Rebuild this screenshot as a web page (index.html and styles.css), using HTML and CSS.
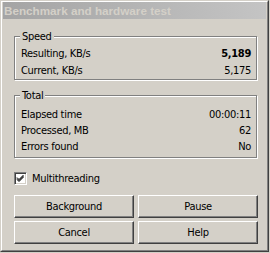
FILE: index.html
```html
<!DOCTYPE html>
<html>
<head>
<meta charset="utf-8">
<link rel="stylesheet" href="styles.css">
</head>
<body>
<div class="window">
  <div class="frame">
    <div class="titlebar"><span class="title">Benchmark and hardware test</span></div>
    <div class="client">
      <div class="group speed">
        <div class="legend">Speed</div>
        <div class="rows">
          <div class="row"><span>Resulting, KB/s</span><span class="val strong">5,189</span></div>
          <div class="row"><span>Current, KB/s</span><span class="val">5,175</span></div>
        </div>
      </div>
      <div class="group total">
        <div class="legend">Total</div>
        <div class="rows">
          <div class="row"><span>Elapsed time</span><span class="val">00:00:11</span></div>
          <div class="row"><span>Processed, MB</span><span class="val">62</span></div>
          <div class="row"><span>Errors found</span><span class="val">No</span></div>
        </div>
      </div>
      <div class="check">
        <span class="box"><svg width="9" height="9" viewBox="0 0 9 9"><path d="M1 3.5 L3 5.5 L7.5 1 M1 4.5 L3 6.5 L7.5 2 M1 5.5 L3 7.5 L7.5 3" fill="none" stroke="#000" stroke-width="1"/></svg></span>
        <span class="check-label">Multithreading</span>
      </div>
      <div class="buttons">
        <div class="btn">Background</div>
        <div class="btn">Pause</div>
        <div class="btn">Cancel</div>
        <div class="btn">Help</div>
      </div>
    </div>
  </div>
</div>
</body>
</html>
```
FILE: styles.css
```css
html, body {
  margin: 0;
  padding: 0;
  background: #d4d0c8;
}
body {
  font-family: "DejaVu Sans Condensed", "DejaVu Sans", Verdana, sans-serif;
  font-stretch: condensed;
  font-size: 11px;
  letter-spacing: -0.3px;
  color: #000;
}
.window {
  width: 269px;
  height: 252px;
  box-sizing: border-box;
  border-style: solid;
  border-width: 1px;
  border-color: #d4d0c8 #404040 #404040 #d4d0c8;
  background: #d4d0c8;
}
.frame {
  height: 100%;
  box-sizing: border-box;
  border-style: solid;
  border-width: 1px;
  border-color: #fff #808080 #808080 #fff;
  padding: 0 1px 1px 1px;
}
.titlebar {
  height: 17px;
  background: linear-gradient(to right, #a4a4a4, #c4c4c4);
  display: flex;
  align-items: center;
  padding-left: 1px;
}
.title {
  color: #d4d0c8;
  font-family: "Liberation Sans", Arial, sans-serif;
  font-stretch: normal;
  letter-spacing: 0;
  font-weight: bold;
  font-size: 11.7px;
}
.client {
  padding: 17px 9px 0 11px;
}
.group {
  border: 1px solid #808080;
  box-shadow: inset 1px 1px 0 #fff, 1px 1px 0 #fff;
  padding: 0 5px 0 6px;
}
.legend {
  width: fit-content;
  margin: -7px 0 0 -1px;
  padding: 0 2px;
  height: 13px;
  line-height: 13px;
  background: #d4d0c8;
}
.speed .rows {
  padding-top: 2px;
}
.speed .row {
  height: 17px;
}
.total {
  margin-top: 15px;
  padding-bottom: 3px;
}
.total .rows {
  padding-top: 4px;
}
.total .row {
  height: 16px;
}
.row {
  display: flex;
  justify-content: space-between;
  align-items: center;
}
.strong {
  font-weight: bold;
}
.check {
  margin-top: 14px;
  height: 13px;
  display: flex;
  align-items: center;
}
.box {
  width: 13px;
  height: 13px;
  box-sizing: border-box;
  border-style: solid;
  border-width: 1px;
  border-color: #808080 #fff #fff #808080;
  background: #fff;
  box-shadow: inset 1px 1px 0 #404040, inset -1px -1px 0 #d4d0c8;
  display: flex;
  align-items: center;
  justify-content: center;
}
.box svg {
  display: block;
}
.check-label {
  margin-left: 5px;
}
.buttons {
  margin-top: 10px;
  display: grid;
  grid-template-columns: 120px 120px;
  grid-auto-rows: 23px;
  gap: 3px 4px;
}
.btn {
  box-sizing: border-box;
  border-style: solid;
  border-width: 1px;
  border-color: #fff #404040 #404040 #fff;
  box-shadow: inset -1px -1px 0 #808080;
  display: flex;
  align-items: center;
  justify-content: center;
  padding-bottom: 1px;
}
```
